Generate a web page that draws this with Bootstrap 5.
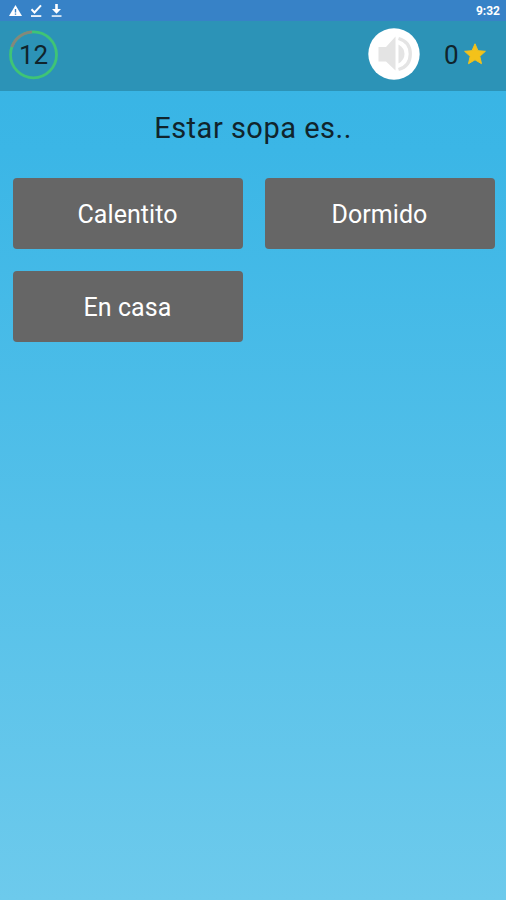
<!DOCTYPE html>
<html lang="es">
<head>
<meta charset="utf-8">
<meta name="viewport" content="width=device-width, initial-scale=1">
<title>Quiz</title>
<link href="https://cdn.jsdelivr.net/npm/bootstrap@5.3.0/dist/css/bootstrap.min.css" rel="stylesheet">
<style>
body{font-family:Roboto,sans-serif;color:#10242c;height:900px;overflow:hidden;background:linear-gradient(#36b3e3 0,#3bb6e6 150px,#6dcaec 900px)}
svg{display:block;flex:none}
.status{height:21px;background:#3782c7;padding:1px 6px 0 8px}
.clock{font-size:12px;font-weight:700;line-height:20px}
.topbar{height:69.5px;background:#2c93b7;padding:0 20px 3px 8px}
.timer text{font-size:26px;fill:#10242c}
.score{font-size:26px;line-height:1;margin-left:23.5px;margin-right:5.5px;padding-top:2px}
.question{font-size:29px;line-height:34px;letter-spacing:.5px;padding-top:20.5px;margin-bottom:33px}
.answers{padding:0 11.5px 0 12.5px}
.answers .row{--bs-gutter-x:22px;--bs-gutter-y:22px}
.answer{height:71px;font-size:25px;letter-spacing:.05px;padding:2px 0 0;border:0;border-radius:4px;background:#666;color:#fff}
.answer:hover{background:#5c5c5c;color:#fff}
</style>
</head>
<body class="d-flex flex-column">
<div class="status d-flex align-items-center justify-content-between text-white">
  <svg width="60" height="20" viewBox="8 1 60 20" fill="#fff">
    <path d="M15.500 5 22 16H9z"/><path d="M15.500 9v3.400m0 1v1.400" stroke="#3782c7" stroke-width="1.400"/>
    <path d="m31.500 9.300 3 3.200L41 5.300" fill="none" stroke="#fff" stroke-width="2"/><path d="M31 15.200h10.300v1.700H31z"/>
    <path d="M55.200 4h2.600v5H61l-4.500 4.700L52 9h3.200z"/><path d="M51.700 15.200h9.800v1.700h-9.800z" opacity=".85"/>
  </svg>
  <span class="clock">9:32</span>
</div>
<header class="topbar d-flex align-items-center">
  <svg class="timer me-auto" width="52" height="52" viewBox="0 0 52 52">
    <circle cx="25.500" cy="26.800" r="23" fill="none" stroke="#3fc476" stroke-width="2.800"/>
    <path d="M3.900 18.900A23 23 0 0 1 24 3.850" fill="none" stroke="#85867c" stroke-width="2.900"/>
    <text x="25.500" y="35.500" text-anchor="middle">12</text>
  </svg>
  <svg width="52" height="52" viewBox="368 28 52 52">
    <circle cx="394" cy="54" r="25.700" fill="#fff"/>
    <path d="M378.500 47H386l9.500-10.500v34L386 61.500h-7.500z" fill="#e4e4e4"/>
    <path d="M398.500 44.500Q404.500 48 404.500 54T398.500 63.500z" fill="#e4e4e4"/>
    <path d="M398.500 38.500C407.500 41 410.300 47.500 410.300 54S407.500 67 398.500 69.500" fill="none" stroke="#e4e4e4" stroke-width="3.300"/>
  </svg>
  <span class="score">0</span>
  <svg width="22" height="22" viewBox="0 0 22 22"><path d="m11 .8 3 6.900 7.400.6-5.600 5 1.700 7.400L11 16.800l-6.500 3.900 1.700-7.400-5.600-5L8 7.700z" fill="#f4c21a" stroke="#f4c21a" stroke-linejoin="round"/></svg>
</header>
<main>
  <h1 class="question text-center fw-normal">Estar sopa es..</h1>
  <div class="answers">
    <div class="row">
      <div class="col-6"><button class="btn answer w-100" type="button">Calentito</button></div>
      <div class="col-6"><button class="btn answer w-100" type="button">Dormido</button></div>
      <div class="col-6"><button class="btn answer w-100" type="button">En casa</button></div>
    </div>
  </div>
</main>
<script src="https://cdn.jsdelivr.net/npm/bootstrap@5.3.0/dist/js/bootstrap.bundle.min.js"></script>
</body>
</html>
